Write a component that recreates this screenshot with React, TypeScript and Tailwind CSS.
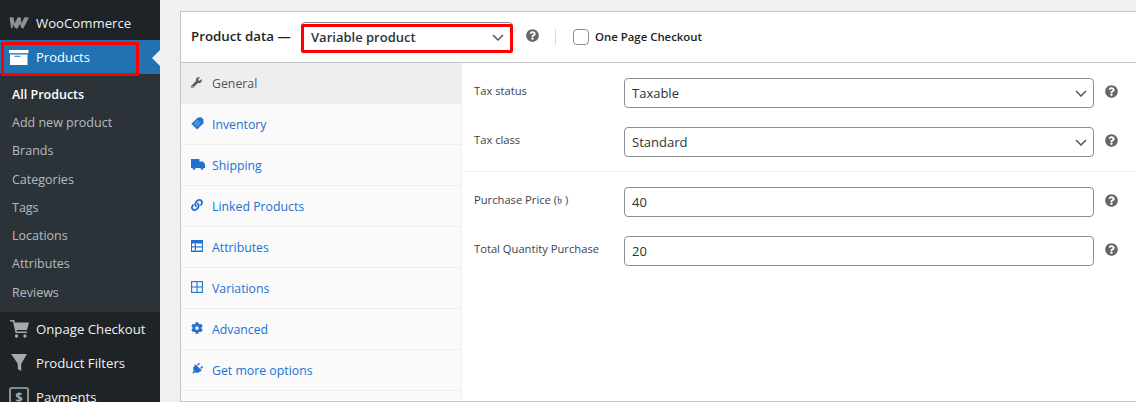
import React from "react";
import { FaWrench, FaLink, FaCog, FaPlug, FaQuestionCircle } from "react-icons/fa";

const font = "font-['Open_Sans','Noto_Sans',sans-serif]";

function Help() {
  return <FaQuestionCircle className="text-[#666666] w-[13px] h-[13px]" />;
}

function WooLogo() {
  return (
    <svg width="20" height="12" viewBox="0 0 20 12">
      <path fill="#8c8f94" d="M.6 1.2C.5.5 1 .2 1.7.2h2.1c.5 0 .8.3.9.8l.9 5.6L8.4.9c.2-.5.6-.7 1-.7h1.5c.5 0 .8.3.9.8l.7 5.6L15 .9c.3-.5.7-.7 1.200-.7h2.300c.9 0 1.300.6.900 1.400l-4.700 9.300c-.4.7-1.200.9-1.700.4-1-1-1.500-2.300-1.900-4.500l-2.500 4.400c-.4.700-1.300.800-1.800.200C5.200 9.600 4.500 8.500 3.900 7.500L3.700 10.700c-.300.900-1.500.900-1.700 0z" />
    </svg>
  );
}

function ArchiveIcon() {
  return (
    <svg width="20" height="15" viewBox="0 0 20 15">
      <path fill="#fff" d="M0 0h19.500v3.200H0z" />
      <path fill="#fff" fillRule="evenodd" d="M1 4.500h17.500V15H1zM5.500 5.800v1h6v-1z" />
    </svg>
  );
}

function CartIcon() {
  return (
    <svg width="19" height="18" viewBox="0 0 19 18">
      <path fill="#a7aaad" d="M0 0h4.200l.8 2.500H19l-2 7.500H6.500l.4 1.600H17v1.500H5.500L3 1.500H0z" />
      <circle cx="6.500" cy="16" r="1.700" fill="#a7aaad" />
      <circle cx="15" cy="16" r="1.700" fill="#a7aaad" />
    </svg>
  );
}

function FunnelIcon() {
  return (
    <svg width="16" height="17" viewBox="0 0 16 17">
      <path fill="#a7aaad" d="M0 0h16l-5 8.500c-.6 1-.8 1.800-.8 3V17L6.800 15v-3.500c0-1.200-.2-2-.8-3z" />
    </svg>
  );
}

function DollarIcon() {
  return (
    <svg width="20" height="20" viewBox="0 0 20 20" fill="none">
      <rect x="1" y="1" width="18" height="18" rx="1.500" stroke="#a7aaad" strokeWidth="1.600" />
      <text x="10" y="15" textAnchor="middle" fontSize="13" fontWeight="700" fill="#a7aaad" fontFamily="Open Sans, sans-serif">$</text>
    </svg>
  );
}

function TicketIcon() {
  return (
    <svg width="13" height="13" viewBox="0 0 13 13">
      <path fill="#2271d1" d="M7 .5l3.200-.2 2.200 2.200.1 3.700-6.300 6.300L.3 6.800z" />
      <path stroke="#a8c8f0" strokeWidth=".6" d="M4.800 3.400l5 5M3.400 4.800l5 5M7.800 3l-5 5M9.300 4.500l-5 5" />
    </svg>
  );
}

function TruckIcon() {
  return (
    <svg width="14" height="11" viewBox="0 0 14 11">
      <path fill="#2271d1" d="M0 0h8.500v2.500H12L14 5v4H0z" />
      <circle cx="3" cy="9.500" r="1.300" fill="#2271d1" />
      <circle cx="11" cy="9.500" r="1.300" fill="#2271d1" />
    </svg>
  );
}

function AttrIcon() {
  return (
    <svg width="12" height="12" viewBox="0 0 12 12">
      <path fill="#2271d1" d="M0 0h12v12H0z" />
      <path fill="#fff" d="M1 3.500h10V10.500H1z" />
      <path fill="#2271d1" d="M1 6.300h10v1.200H1zM3.800 3.500h1.200v7H3.800z" />
    </svg>
  );
}

function GridIcon() {
  return (
    <svg width="12" height="12" viewBox="0 0 12 12" fill="none" stroke="#2271d1" strokeWidth="1.100">
      <rect x=".6" y=".6" width="10.800" height="10.800" />
      <path d="M6 .6v10.800M.6 6h10.800" />
    </svg>
  );
}

const submenu = ["All Products", "Add new product", "Brands", "Categories", "Tags", "Locations", "Attributes", "Reviews"];

const tabs: { label: string; icon: React.ReactNode; active?: boolean }[] = [
  { label: "General", icon: <FaWrench className="w-[11px] h-[11px] text-[#555d66]" />, active: true },
  { label: "Inventory", icon: <TicketIcon /> },
  { label: "Shipping", icon: <TruckIcon /> },
  { label: "Linked Products", icon: <FaLink className="w-[12px] h-[12px] text-[#2271d1]" /> },
  { label: "Attributes", icon: <AttrIcon /> },
  { label: "Variations", icon: <GridIcon /> },
  { label: "Advanced", icon: <FaCog className="w-[12px] h-[12px] text-[#2271d1]" /> },
  { label: "Get more options", icon: <FaPlug className="w-[12px] h-[12px] text-[#2271d1] rotate-45" /> },
];

function TopItem({ icon, label }: { icon: React.ReactNode; label: string }) {
  return (
    <div className="h-[34px] flex items-center text-[#f0f0f1]">
      <div className="w-[36px] flex justify-center pl-[2px] shrink-0">{icon}</div>
      <span className="text-[13.200px] leading-[14px]">{label}</span>
    </div>
  );
}

function Chevron() {
  return (
    <svg width="12" height="7" viewBox="0 0 12 7" fill="none" stroke="#50575e" strokeWidth="1.500">
      <path d="M1 1l5 5 5-5" />
    </svg>
  );
}

function Field({ label, children, className }: { label: string; children: React.ReactNode; className?: string }) {
  return (
    <div className={"flex " + (className ?? "")}>
      <div className="w-[150px] shrink-0 text-[11.200px] leading-[18px] pt-[4px] text-[#3c434a]">{label}</div>
      <div className="w-[470px] h-[30px] border border-[#8c8f94] rounded-[4px] bg-white flex items-center justify-between pl-[7px] pr-[6px] text-[13px] text-[#2c3338]">
        {children}
      </div>
      <div className="ml-[11px] h-[30px] flex items-start pt-[7px]"><Help /></div>
    </div>
  );
}

function FieldText({ children }: { children: React.ReactNode }) {
  return <span className="pt-[2px]">{children}</span>;
}

export default function App() {
  return (
    <div className={"w-[1136px] h-[402px] overflow-hidden flex bg-[#f0f0f1] " + font}>
      <aside className="relative w-[160px] shrink-0 bg-[#1d2327] pt-[6px]">
        <TopItem icon={<WooLogo />} label="WooCommerce" />
        <div className="relative h-[34px] bg-[#2271b1] flex items-center text-white">
          <div className="w-[36px] flex justify-center pl-[2px] shrink-0"><ArchiveIcon /></div>
          <span className="text-[13px] leading-none">Products</span>
          <div className="absolute right-0 top-[10px] w-0 h-0 border-y-[8px] border-y-transparent border-r-[8px] border-r-[#f0f0f1]" />
          <div className="absolute left-[1px] top-[2px] w-[138px] h-[34px] border-[3px] border-[#ff0000]" />
        </div>
        <div className="bg-[#2c3338] pt-[7.150px] pb-[4.850px]">
          {submenu.map((s, i) => (
            <div key={s} className={"h-[28.250px] flex items-center pl-[12px] text-[12.500px] " + (i === 0 ? "text-white font-semibold" : "text-[#f0f6fcb3]")}>
              {s}
            </div>
          ))}
        </div>
        <TopItem icon={<CartIcon />} label="Onpage Checkout" />
        <TopItem icon={<FunnelIcon />} label="Product Filters" />
        <TopItem icon={<DollarIcon />} label="Payments" />
      </aside>

      <main className="flex-1 pl-[20px] pt-[11px] min-w-0">
        <div className="h-[391px] border border-[#c3c4c7] border-r-0 bg-white flex flex-col">
          <header className="h-[51px] shrink-0 border-b border-[#c3c4c7] flex items-center pl-[10px]">
            <span className="text-[13.300px] font-semibold text-[#1d2327] w-[110px]">Product data —</span>
            <div className="relative w-[212px] h-[31px] flex items-center justify-between pl-[9px] pr-[8px] border border-[#8c8f94] rounded-[4px]">
              <span className="text-[13px] font-semibold text-[#2c3338] pt-[2px]">Variable product</span>
              <Chevron />
              <div className="absolute -left-px -right-px top-[1px] -bottom-px border-[3px] border-[#ff0000] rounded-[2px]" />
            </div>
            <div className="ml-[13px] -mt-[4px]"><Help /></div>
            <div className="ml-[16px] w-px h-[16px] bg-[#dcdcde]" />
            <div className="ml-[17px] w-[16px] h-[16px] border border-[#8c8f94] rounded-[4px] bg-white" />
            <span className="ml-[6px] text-[11.400px] font-semibold text-[#1d2327]">One Page Checkout</span>
          </header>
          <div className="flex-1 flex min-h-0">
            <nav className="w-[281px] shrink-0 bg-[#fafafa] border-r border-[#eeeeee]">
              {tabs.map((t) => (
                <div key={t.label} className={"h-[41px] flex items-center border-b pt-[2px] pl-[10px] text-[12.300px] " + (t.active ? "bg-[#eeeeee] border-[#eeeeee] text-[#555555]" : "border-[#eeeeee] text-[#2271d1]")}>
                  <div className="w-[21px] -mt-[4px] shrink-0">{t.icon}</div>
                  <span>{t.label}</span>
                </div>
              ))}
            </nav>
            <section className="flex-1 min-w-0">
              <div className="px-[12px] pt-[15px] h-[109px] border-b border-[#eeeeee]">
                <Field label="Tax status"><FieldText>Taxable</FieldText><Chevron /></Field>
                <Field label="Tax class" className="mt-[19px]"><FieldText>Standard</FieldText><Chevron /></Field>
              </div>
              <div className="px-[12px] pt-[15px]">
                <Field label="Purchase Price (৳ )"><FieldText>40</FieldText></Field>
                <Field label="Total Quantity Purchase" className="mt-[19px]"><FieldText>20</FieldText></Field>
              </div>
            </section>
          </div>
        </div>
      </main>
    </div>
  );
}
